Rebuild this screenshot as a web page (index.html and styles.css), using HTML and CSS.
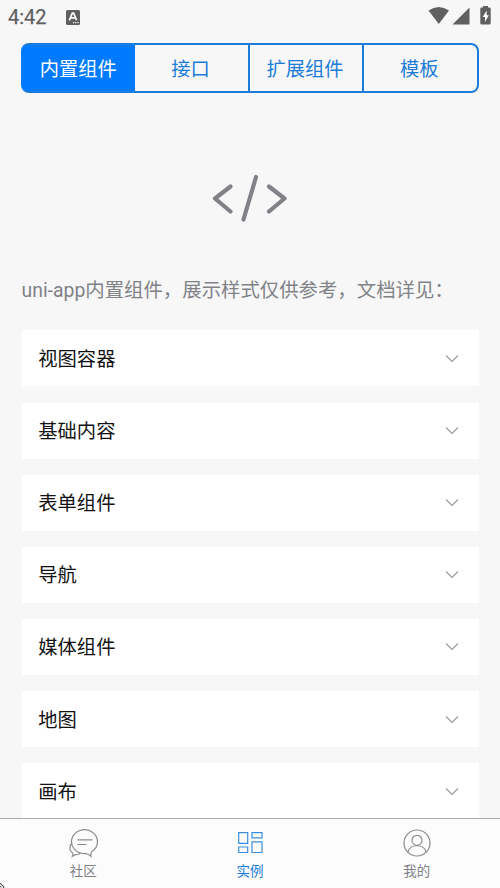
FILE: index.html
```html
<!DOCTYPE html>
<html lang="zh-CN">
<head>
<meta charset="utf-8">
<meta name="viewport" content="width=device-width">
<title>内置组件</title>
<link rel="stylesheet" href="styles.css">
</head>
<body>
<div class="screen">
  <header class="status">
    <span class="time">4:42</span>
    <svg class="keyboard" viewBox="0 0 14 15"><rect width="14" height="15" rx="1.5" fill="#606060"/><path d="M3.3 10.3 6.4 3h1.2l3 7.3M4.7 7.8h4.6" fill="none" stroke="#fff" stroke-width="1.7"/><path d="M7 12.7h1.2m1 0h1.2m1 0h1.2" stroke="#fff" stroke-width="1.2"/></svg>
    <svg class="signals" viewBox="0 0 64 20"><path d="M.5 4.5Q10.800-2.500 21 4.500L10.800 18Z"/><path d="M41.500 1.500V18.500H24.500Z"/><path d="M55 1.500V0h5v1.500h1.500q1.200 0 1.200 1.200V17.300q0 1.200-1.200 1.200h-8q-1.200 0-1.200-1.200V2.700q0-1.200 1.200-1.200Z"/><path d="M58.800 4.500 54.700 11h2.300v5l3.800-6.800h-2.200Z" fill="#fff"/></svg>
  </header>
  <main class="content">
    <nav class="segments">
      <span class="segment active">内置组件</span><span class="segment">接口</span><span class="segment">扩展组件</span><span class="segment">模板</span>
    </nav>
    <div class="hero">
      <svg viewBox="0 0 76 48"><path d="M18.500 12.500 3 24.500l15.500 13M44 3 31.500 45.500M57 12.500l15.500 12L57 37.500"/></svg>
    </div>
    <p class="intro">uni-app内置组件，展示样式仅供参考，文档详见：</p>
    <section class="list">
      <div class="card"><span>视图容器</span><svg class="chevron" viewBox="0 0 14 10"><path d="m1 1.500 6 6 6-6"/></svg></div>
      <div class="card"><span>基础内容</span><svg class="chevron" viewBox="0 0 14 10"><path d="m1 1.500 6 6 6-6"/></svg></div>
      <div class="card"><span>表单组件</span><svg class="chevron" viewBox="0 0 14 10"><path d="m1 1.500 6 6 6-6"/></svg></div>
      <div class="card"><span>导航</span><svg class="chevron" viewBox="0 0 14 10"><path d="m1 1.500 6 6 6-6"/></svg></div>
      <div class="card"><span>媒体组件</span><svg class="chevron" viewBox="0 0 14 10"><path d="m1 1.500 6 6 6-6"/></svg></div>
      <div class="card"><span>地图</span><svg class="chevron" viewBox="0 0 14 10"><path d="m1 1.500 6 6 6-6"/></svg></div>
      <div class="card"><span>画布</span><svg class="chevron" viewBox="0 0 14 10"><path d="m1 1.500 6 6 6-6"/></svg></div>
    </section>
  </main>
  <footer class="tabs">
    <div class="tab">
      <svg viewBox="0 0 30 30"><path d="M23.800 23.500A13 11.900 0 1 0 17.800 25.500Q20.500 26.200 23 28.200Q22.500 25.800 23.800 23.500M4.300 14.300C.8 18 1 22.500 4.700 25.200Q5 26.800 4.500 28.200Q7 26.300 9.300 26.300Q11.500 26.200 12.500 25.200M9.500 11.800h15M9.500 16.500h9"/></svg>
      <span>社区</span>
    </div>
    <div class="tab selected">
      <svg viewBox="0 0 30 30"><path d="M3.700 4.700h9v10.600h-9zM17 4.700h10v5.200H17zM3.700 19h9v5.500h-9zM17 13.800h10v10.700H17z"/></svg>
      <span>实例</span>
    </div>
    <div class="tab">
      <svg viewBox="0 0 30 30"><circle cx="15" cy="15" r="13"/><circle cx="15" cy="12.300" r="5"/><path d="M6 24.200C7.500 15.600 22.500 15.600 24 24.200"/></svg>
      <span>我的</span>
    </div>
    <svg class="pointer" viewBox="0 0 5 5"><path d="M0 .5h1v1h1v1h1v1h1v1H3M0 3.500h1v1" fill="none" stroke="#333" stroke-width=".8"/></svg>
  </footer>
</div>
</body>
</html>
```
FILE: styles.css
```css
* { box-sizing: border-box; }
body {
  margin: 0;
  background: #f7f7f7;
  font-family: Roboto, "Noto Sans CJK SC", sans-serif;
}
.screen {
  position: relative;
  display: flex;
  flex-direction: column;
  height: 888px;
  overflow: hidden;
}
.status {
  display: flex;
  flex: 0 0 35px;
  align-items: center;
  padding: 0 8px;
  color: #606060;
}
.time {
  width: 57.500px;
  font-size: 20px;
  font-weight: 400;
  -webkit-text-stroke: .25px #606060;
  line-height: 33px;
}
.keyboard { width: 14px; height: 15px; margin-top: -1px; }
.signals {
  width: 64px;
  height: 20px;
  margin-left: auto;
  margin-top: -3px;
  fill: #606060;
}
.content {
  flex: 1;
  min-height: 0;
  overflow: hidden;
  padding: 8.400px 21.500px 0;
}
.segments {
  display: flex;
  height: 50px;
  margin-left: -.5px;
  border: 2px solid #1b7cda;
  border-left-color: #007aff;
  border-radius: 8px;
  background: linear-gradient(90deg, #007aff 20px, transparent 20px);
  overflow: hidden;
}
.segment {
  flex: 1;
  border-left: 2px solid #1b7cda;
  color: #1b7cda;
  font-size: 19.3px;
  line-height: 50px;
  text-align: center;
  text-indent: -2px;
}
.segment.active {
  border-left: 0;
  background: #007aff;
  color: #fff;
}
.segment.active + .segment { border-left: 0; }
.hero {
  display: flex;
  height: 182.200px;
  padding-top: 80.600px;
  justify-content: center;
}
.hero svg {
  width: 76px;
  height: 48px;
  fill: none;
  stroke: #808287;
  stroke-width: 4.2;
  stroke-linecap: round;
  stroke-linejoin: round;
}
.intro {
  margin: 0;
  height: 54.800px;
  color: #808287;
  font-size: 19.400px;
  line-height: 29px;
  white-space: nowrap;
}
.list {
  display: flex;
  flex-direction: column;
  gap: 16.150px;
}
.card {
  display: flex;
  flex: 0 0 56px;
  align-items: center;
  justify-content: space-between;
  padding: 0 19.500px 0 16.800px;
  background: #fff;
  color: #111;
  font-size: 19.3px;
  line-height: 28px;
}
.card span { padding-top: 3px; }
.chevron {
  width: 14px;
  height: 10px;
  margin-top: 1px;
  fill: none;
  stroke: #999;
  stroke-width: 1.200;
}
.tabs {
  position: relative;
  display: flex;
  flex: 0 0 70px;
  border-top: 1px solid #aaa;
  background: #fcfcfc;
}
.tab {
  display: flex;
  flex: 1;
  flex-direction: column;
  align-items: center;
  padding-top: 9px;
  color: #808287;
  font-size: 13.500px;
  line-height: 20px;
}
.tab svg {
  width: 30px;
  height: 30px;
  margin-bottom: 3px;
  fill: none;
  stroke: #8c8c8c;
  stroke-width: 1.200;
}
.selected { color: #1b7cda; }
.selected svg { stroke: #3b8edc; }
.pointer {
  position: absolute;
  left: 0;
  bottom: 0;
  width: 5px;
  height: 5px;
}
```
